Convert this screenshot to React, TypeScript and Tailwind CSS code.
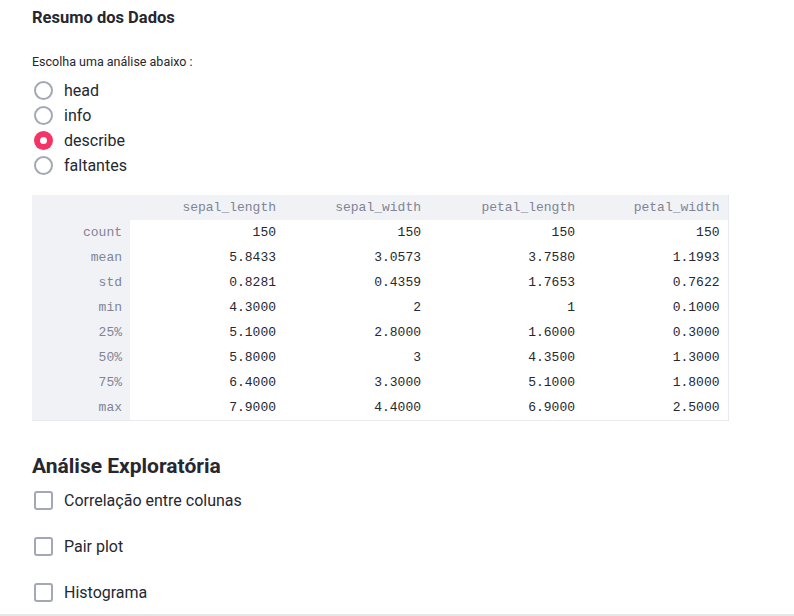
const options = ["head", "info", "describe", "faltantes"];

const columns = ["sepal_length", "sepal_width", "petal_length", "petal_width"];

const rows: [string, string[]][] = [
  ["count", ["150", "150", "150", "150"]],
  ["mean", ["5.8433", "3.0573", "3.7580", "1.1993"]],
  ["std", ["0.8281", "0.4359", "1.7653", "0.7622"]],
  ["min", ["4.3000", "2", "1", "0.1000"]],
  ["25%", ["5.1000", "2.8000", "1.6000", "0.3000"]],
  ["50%", ["5.8000", "3", "4.3500", "1.3000"]],
  ["75%", ["6.4000", "3.3000", "5.1000", "1.8000"]],
  ["max", ["7.9000", "4.4000", "6.9000", "2.5000"]],
];

const colWidths = ["w-[154px]", "w-[145px]", "w-[154px]", "w-[145px]"];

const Radio = ({ label, checked }: { label: string; checked?: boolean }) => (
  <label className="flex items-center h-[25px] gap-[11px]">
    {checked ? (
      <span className="ml-[2px] w-[19px] h-[19px] rounded-full bg-[#f63366] flex items-center justify-center">
        <span className="w-[7px] h-[7px] rounded-full bg-white" />
      </span>
    ) : (
      <span className="ml-[2px] w-[19px] h-[19px] rounded-full border-2 border-[#a3a8b4] bg-white" />
    )}
    <span className="text-[16px] text-[#262730]">{label}</span>
  </label>
);

const Checkbox = ({ label }: { label: string }) => (
  <label className="flex items-center h-[24px] gap-[11px]">
    <span className="ml-[2px] w-[19px] h-[19px] rounded-[3px] border-2 border-[#a3a8b4] bg-white" />
    <span className="text-[16px] text-[#262730]">{label}</span>
  </label>
);

export default function App() {
  return (
    <div
      className="w-[794px] h-[616px] bg-white border-b-2 border-[#e6e6e6] overflow-hidden text-[#262730]"
      style={{ fontFamily: 'Roboto, "Noto Sans", sans-serif' }}
    >
      <div className="pl-8 pt-[6px]">
        <h3 className="text-[16.5px] font-bold leading-[24px]">Resumo dos Dados</h3>

        <p className="mt-[22px] text-[12.5px] leading-[20px]">Escolha uma análise abaixo :</p>

        <div className="mt-[6px] flex flex-col">
          {options.map((o) => (
            <Radio key={o} label={o} checked={o === "describe"} />
          ))}
        </div>

        <table
          className="mt-[17px] border-collapse text-[13px] border-r border-b border-[#e6e9ef]"
          style={{ fontFamily: '"Liberation Mono", "DejaVu Sans Mono", monospace' }}
        >
          <thead>
            <tr className="bg-[#f0f2f6] h-[25px]">
              <th className="w-[98px]" />
              {columns.map((c, i) => (
                <th key={c} className={`${colWidths[i]} pr-2 text-right font-normal text-[#808495]`}>
                  {c}
                </th>
              ))}
            </tr>
          </thead>
          <tbody>
            {rows.map(([idx, vals]) => (
              <tr key={idx} className="h-[25px]">
                <td className="bg-[#f0f2f6] pr-2 text-right text-[#808495]">{idx}</td>
                {vals.map((v, i) => (
                  <td key={i} className="pr-2 text-right text-[#262730]">
                    {v}
                  </td>
                ))}
              </tr>
            ))}
          </tbody>
        </table>

        <h2 className="mt-[30px] text-[21px] font-bold leading-[30px]">Análise Exploratória</h2>

        <div className="mt-[8px] flex flex-col gap-[22px]">
          <Checkbox label="Correlação entre colunas" />
          <Checkbox label="Pair plot" />
          <Checkbox label="Histograma" />
        </div>
      </div>
    </div>
  );
}
